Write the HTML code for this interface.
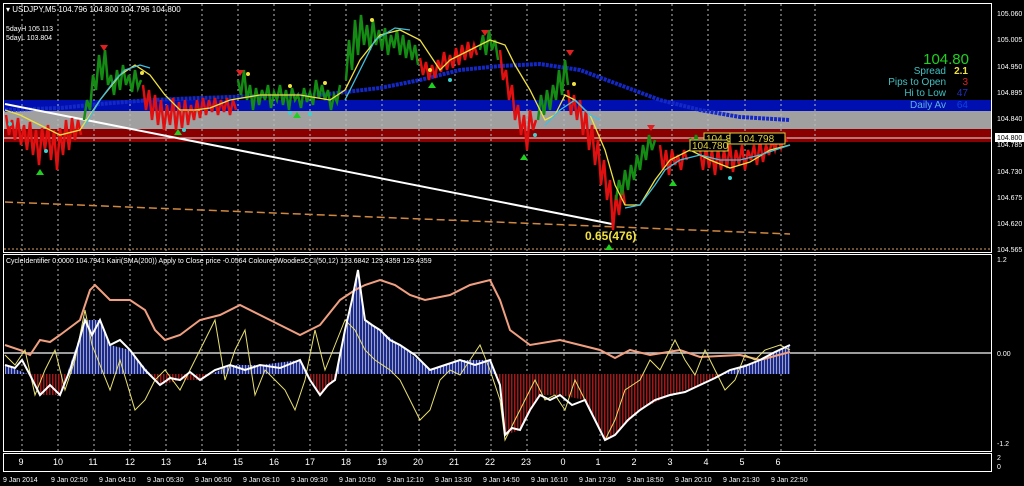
<!DOCTYPE html><html><head><meta charset="utf-8"><style>
html,body{margin:0;padding:0;background:#000;width:1024px;height:486px;overflow:hidden}
svg{display:block}
text{font-family:"Liberation Sans",sans-serif}
</style></head><body>
<svg width="1024" height="486" viewBox="0 0 1024 486" xmlns="http://www.w3.org/2000/svg">
<defs>
<pattern id="pb" width="3" height="10" patternUnits="userSpaceOnUse"><rect width="3" height="10" fill="#1c2a8a"/><rect x="2" width="1" height="10" fill="#9aa0c8"/></pattern>
<pattern id="pr" width="3" height="10" patternUnits="userSpaceOnUse"><rect width="3" height="10" fill="#000"/><rect x="1" width="1.5" height="10" fill="#a01818"/></pattern>
<clipPath id="ab"><rect x="4" y="254" width="988" height="120"/></clipPath>
<clipPath id="be"><rect x="4" y="374" width="988" height="78"/></clipPath>
</defs>
<rect width="1024" height="486" fill="#000"/>
<rect x="4" y="100" width="988" height="11" fill="#0010b0"/>
<rect x="4" y="111" width="988" height="18" fill="#a0a0a0"/>
<rect x="4" y="129" width="988" height="13" fill="#8a0000"/>
<line x1="4" y1="138" x2="992" y2="138" stroke="#e8e8e8" stroke-width="1"/>
<g stroke="#bbb" stroke-width="1" stroke-dasharray="2,3">
<path d="M22 4V252M58 4V252M94 4V252M130 4V252M166 4V252M202 4V252M238 4V252M274 4V252M310 4V252M346 4V252M382 4V252M419 4V252M455 4V252M491 4V252M527 4V252M564 4V252M600 4V252M636 4V252M672 4V252M708 4V252M745 4V252M781 4V252M815 4V252"/>
<path d="M22 254V451M58 254V451M94 254V451M130 254V451M166 254V451M202 254V451M238 254V451M274 254V451M310 254V451M346 254V451M382 254V451M419 254V451M455 254V451M491 254V451M527 254V451M564 254V451M600 254V451M636 254V451M672 254V451M708 254V451M745 254V451M781 254V451M815 254V451"/>
</g>
<line x1="4" y1="249" x2="992" y2="249" stroke="#e0a060" stroke-dasharray="2,2"/>
<polyline points="5,110 60,108 100,104 150,100 200,98 260,96 320,95 380,88 420,80 460,70 500,66 540,64 580,70 620,85 660,100 700,110 740,117 790,120" fill="none" stroke="#1428c8" stroke-width="4" stroke-dasharray="3,1"/>
<line x1="5" y1="104" x2="612" y2="224" stroke="#fff" stroke-width="2"/>
<line x1="5" y1="202" x2="790" y2="234" stroke="#d08840" stroke-width="1.5" stroke-dasharray="8,4"/>
<g fill="none" stroke="#e01010" stroke-width="2.5">
<polyline points="6,115 9,135 12,120 15,140 18,118 21,145 24,125 27,150 30,122 33,155 36,130 39,165 42,128 45,150 48,125 51,160 54,130 57,170 60,128 63,155 66,120 69,150 72,118 75,140 78,120 81,135"/>
<polyline points="143,85 146,110 149,90 152,120 155,95 158,125 161,100 164,130 167,105 170,125 173,98 176,130 179,102 182,128 185,100 188,125 191,105 194,120 197,100 200,118 203,98 206,115 209,100 212,112 215,98 218,115 221,100 224,112 227,98 230,115 233,100 236,110"/>
<polyline points="420,58 423,75 426,62 429,80 432,65 435,78 438,60 441,72 444,52 447,70 450,55 453,68 456,48 459,65 462,45 465,60 468,42 471,58 474,45 477,55"/>
<polyline points="500,50 503,80 506,70 509,100 512,85 515,120 518,105 521,135 524,115 527,150 530,110 533,130 536,120"/>
<polyline points="568,90 571,115 574,95 577,120 580,100 583,135 586,110 589,150 592,125 595,165 598,140 601,185 604,160 607,200 610,180 613,230 616,195 619,215 622,185 625,205"/>
<polyline points="660,145 663,170 666,150 669,175 672,150 675,165 678,155 681,170 684,150 687,160"/>
<polyline points="700,150 703,170 706,145 709,168 712,150 715,175 718,148 721,170 724,150 727,168 730,145 733,172 736,150 739,165 742,145 745,170 748,150 751,160 754,145 757,165 760,140 763,162 766,145 769,155 772,140 775,150 778,138 781,148 784,135 787,142"/>
</g>
<g fill="none" stroke="#148c14" stroke-width="2.5">
<polyline points="84,120 87,100 90,110 93,75 96,90 99,55 102,80 105,50 108,85 111,75 114,95 117,70 120,90 123,65 126,85 129,75 132,92 135,70 138,88 141,80"/>
<polyline points="238,80 241,95 244,70 247,100 250,85 253,110 256,88 259,105 262,90 265,100 268,85 271,108 274,92 277,100 280,85 283,105 286,90 289,110 292,88 295,100 298,95 301,108 304,88 307,102 310,92 313,105 316,80 319,98 322,85 325,100 328,90 331,110 334,95 337,102 340,85"/>
<polyline points="346,80 349,40 352,70 355,20 358,55 361,15 364,45 367,25 370,50 373,20 376,45 379,30 382,50 385,28 388,55 391,35 394,48 397,30 400,55 403,35 406,58 409,40 412,60 415,45 418,65"/>
<polyline points="480,50 483,35 486,55 489,30 492,50 495,40 498,60"/>
<polyline points="538,120 541,95 544,115 547,90 550,110 553,85 556,100 559,70 562,95 565,60 568,85"/>
<polyline points="616,200 619,180 622,195 625,170 628,190 631,165 634,180 637,155 640,170 643,145 646,160 649,135 652,150 655,140"/>
<polyline points="690,138 693,150 696,135 699,148"/>
</g>
<polyline points="5,110 20,115 40,125 60,135 80,130 100,100 120,75 135,65 150,75 165,95 180,110 200,110" fill="none" stroke="#f0e040" stroke-width="1.3"/>
<polyline points="85,125 100,100 115,80 125,70 140,65 150,68" fill="none" stroke="#40c0e0" stroke-width="1.3"/>
<polyline points="195,110 210,108 230,100 260,95 300,95 330,100 345,90 360,60 380,35 400,30 420,40 440,70 450,60 470,50 490,40 505,45 515,65 530,90 545,120 555,115 565,95 575,100 590,115 605,150 615,185 625,205 640,205 655,180 670,160 690,150 710,160 730,168 750,162 770,150 790,145" fill="none" stroke="#f0e040" stroke-width="1.3"/>
<polyline points="345,100 360,70 375,40 395,28 410,30" fill="none" stroke="#40c0e0" stroke-width="1.3"/>
<polyline points="545,125 560,110 575,100 590,115 600,120" fill="none" stroke="#40c0e0" stroke-width="1.3"/>
<polyline points="625,208 640,205 655,185 665,170 680,160 700,155 720,160 740,160 760,155 790,145" fill="none" stroke="#40c0e0" stroke-width="1.3"/>
<g fill="#e02020"><path d="M100 45h8l-4 6z M236 70h8l-4 6z M566 50h8l-4 6z M647 125h8l-4 6z M481 30h8l-4 6z"/></g>
<g fill="#20d020"><path d="M36 175h8l-4-6z M174 135h8l-4-6z M293 118h8l-4-6z M428 88h8l-4-6z M520 160h8l-4-6z M605 250h8l-4-6z M669 186h8l-4-6z"/></g>
<g fill="#40d0d0"><circle cx="10" cy="124" r="2"/><circle cx="46" cy="151" r="2"/><circle cx="184" cy="130" r="2"/><circle cx="290" cy="113" r="2"/><circle cx="310" cy="114" r="2"/><circle cx="535" cy="135" r="2"/><circle cx="730" cy="178" r="2"/><circle cx="450" cy="80" r="2"/></g>
<g fill="#f0e040"><circle cx="142" cy="73" r="2"/><circle cx="248" cy="74" r="2"/><circle cx="290" cy="86" r="2"/><circle cx="325" cy="83" r="2"/><circle cx="372" cy="20" r="2"/><circle cx="574" cy="84" r="2"/><circle cx="430" cy="70" r="2"/></g>
<rect x="704" y="133" width="50" height="11" fill="#000" stroke="#e0d040"/>
<text x="706" y="142" font-size="10" fill="#e0d040">104.800</text>
<rect x="690" y="140" width="38" height="11" fill="#000" stroke="#e0d040"/>
<text x="692" y="149" font-size="10" fill="#e0d040">104.780</text>
<rect x="730" y="133" width="55" height="11" fill="#000" stroke="#e0d040"/>
<text x="738" y="142" font-size="10" fill="#e0d040">104.798</text>
<text x="585" y="240" font-size="12" font-weight="bold" fill="#f0e040">0.65(476)</text>
<text x="6" y="12" font-size="8" fill="#fff">▾ USDJPY,M5  104.796 104.800 104.796 104.800</text>
<text x="6" y="31" font-size="7" fill="#fff">5dayH 105.113</text>
<text x="6" y="40" font-size="7" fill="#fff">5dayL 103.804</text>
<text x="969" y="64" font-size="15" fill="#20d020" text-anchor="end">104.80</text>
<text x="946" y="74" font-size="10" fill="#40c0c0" text-anchor="end">Spread</text>
<text x="968" y="74" font-size="10" fill="#f0e040" text-anchor="end" font-weight="bold">2.1</text>
<text x="946" y="85" font-size="10" fill="#40c0c0" text-anchor="end">Pips to Open</text>
<text x="968" y="85" font-size="10" fill="#e02020" text-anchor="end">3</text>
<text x="946" y="96" font-size="10" fill="#40c0c0" text-anchor="end">Hi to Low</text>
<text x="968" y="96" font-size="10" fill="#2030c0" text-anchor="end">47</text>
<text x="946" y="108" font-size="10" fill="#60b0e0" text-anchor="end">Daily Av</text>
<text x="968" y="108" font-size="10" fill="#1040e0" text-anchor="end">64</text>
<rect x="3.5" y="3.5" width="988" height="249" fill="none" stroke="#fff"/>
<g font-size="7" fill="#fff">
<text x="997" y="16">105.060</text><text x="997" y="42">105.005</text><text x="997" y="69">104.950</text><text x="997" y="95">104.895</text><text x="997" y="121">104.840</text><text x="997" y="147">104.785</text><text x="997" y="174">104.730</text><text x="997" y="200">104.675</text><text x="997" y="226">104.620</text><text x="997" y="252">104.565</text>
</g>
<rect x="995" y="133" width="29" height="9" fill="#fff"/>
<text x="997" y="140" font-size="7" fill="#000">104.800</text>
<line x1="4" y1="353" x2="992" y2="353" stroke="#d0d0d0" stroke-width="1.5"/>
<polygon clip-path="url(#ab)" points="5,374 5,365 30,375 40,395 60,395 85,320 100,320 110,345 130,350 160,385 180,380 200,380 230,365 260,365 300,360 320,395 335,380 345,330 358,270 365,320 380,330 400,345 430,370 460,360 490,360 500,385 505,435 520,430 540,395 560,395 585,400 605,440 615,435 640,410 670,395 700,385 730,370 760,360 790,345 790,374" fill="url(#pb)"/>
<polygon clip-path="url(#be)" points="5,374 5,365 30,375 40,395 60,395 85,320 100,320 110,345 130,350 160,385 180,380 200,380 230,365 260,365 300,360 320,395 335,380 345,330 358,270 365,320 380,330 400,345 430,370 460,360 490,360 500,385 505,435 520,430 540,395 560,395 585,400 605,440 615,435 640,410 670,395 700,385 730,370 760,360 790,345 790,374" fill="url(#pr)"/>
<polyline points="5,345 20,350 30,355 40,340 50,342 60,335 80,320 90,290 95,285 100,290 110,300 120,300 130,300 145,310 155,330 165,340 180,335 200,320 220,315 240,305 260,315 280,325 300,335 320,325 340,300 355,290 365,285 380,280 395,285 410,295 425,300 450,295 470,285 490,280 500,300 510,330 530,345 560,340 580,345 600,350 615,358 630,350 650,355 680,350 700,357 740,355 760,360 790,352" fill="none" stroke="#f0a080" stroke-width="2"/>
<polyline points="5,355 15,365 25,350 35,395 45,370 55,350 65,390 75,360 85,310 92,345 100,365 110,390 120,360 135,410 145,400 155,380 165,370 180,390 195,360 205,340 215,320 225,380 235,350 245,330 255,395 265,370 275,380 285,390 295,410 305,380 315,330 325,370 335,345 345,320 355,330 365,350 375,360 390,370 400,380 410,400 420,420 430,410 440,380 450,370 460,375 470,360 480,345 490,370 500,400 505,440 515,420 525,400 535,380 545,400 555,395 565,410 575,380 585,400 595,420 605,440 615,420 625,390 640,380 650,360 660,370 675,340 685,360 695,375 705,350 715,370 725,390 735,380 745,355 755,360 765,350 780,345 790,350" fill="none" stroke="#e8e070" stroke-width="1"/>
<polyline points="5,365 15,368 22,360 30,375 40,395 50,385 60,395 70,370 78,345 85,320 92,335 100,320 110,345 120,340 130,350 145,370 160,385 170,378 180,380 190,372 200,380 215,370 230,365 245,370 260,365 280,368 300,360 310,380 320,395 328,385 335,380 345,330 352,300 358,270 362,300 365,320 372,325 380,330 390,340 400,345 415,355 430,370 445,365 460,360 475,365 490,360 500,385 505,435 512,428 520,430 530,410 540,395 550,400 560,395 572,405 585,400 595,420 605,440 615,435 628,420 640,410 655,400 670,395 685,392 700,385 715,378 730,370 745,366 760,360 775,352 790,345" fill="none" stroke="#fff" stroke-width="2"/>
<text x="6" y="263" font-size="7" fill="#fff">CycleIdentifier 0.0000 104.7941  Kairi(SMA(200)) Apply to Close price -0.0564  ColouredWoodiesCCI(50,12) 123.6842 129.4359 129.4359</text>
<rect x="3.5" y="254.5" width="988" height="197" fill="none" stroke="#fff"/>
<g font-size="7" fill="#fff"><text x="997" y="262">1.2</text><text x="997" y="356">0.00</text><text x="997" y="446">-1.2</text><text x="997" y="460">2</text><text x="997" y="469">0</text></g>
<rect x="3.5" y="453.5" width="988" height="18" fill="none" stroke="#fff"/>
<g font-size="9" fill="#fff" text-anchor="middle">
<text x="21" y="465">9</text><text x="58" y="465">10</text><text x="93" y="465">11</text><text x="130" y="465">12</text><text x="166" y="465">13</text><text x="202" y="465">14</text><text x="238" y="465">15</text><text x="274" y="465">16</text><text x="310" y="465">17</text><text x="346" y="465">18</text><text x="382" y="465">19</text><text x="418" y="465">20</text><text x="454" y="465">21</text><text x="490" y="465">22</text><text x="526" y="465">23</text><text x="563" y="465">0</text><text x="598" y="465">1</text><text x="634" y="465">2</text><text x="670" y="465">3</text><text x="706" y="465">4</text><text x="742" y="465">5</text><text x="778" y="465">6</text>
</g>
<g font-size="7" fill="#fff">
<text x="3" y="482">9 Jan 2014</text><text x="51" y="482">9 Jan 02:50</text><text x="99" y="482">9 Jan 04:10</text><text x="147" y="482">9 Jan 05:30</text><text x="195" y="482">9 Jan 06:50</text><text x="243" y="482">9 Jan 08:10</text><text x="291" y="482">9 Jan 09:30</text><text x="339" y="482">9 Jan 10:50</text><text x="387" y="482">9 Jan 12:10</text><text x="435" y="482">9 Jan 13:30</text><text x="483" y="482">9 Jan 14:50</text><text x="531" y="482">9 Jan 16:10</text><text x="579" y="482">9 Jan 17:30</text><text x="627" y="482">9 Jan 18:50</text><text x="675" y="482">9 Jan 20:10</text><text x="723" y="482">9 Jan 21:30</text><text x="771" y="482">9 Jan 22:50</text>
</g>
</svg>
</body></html>
